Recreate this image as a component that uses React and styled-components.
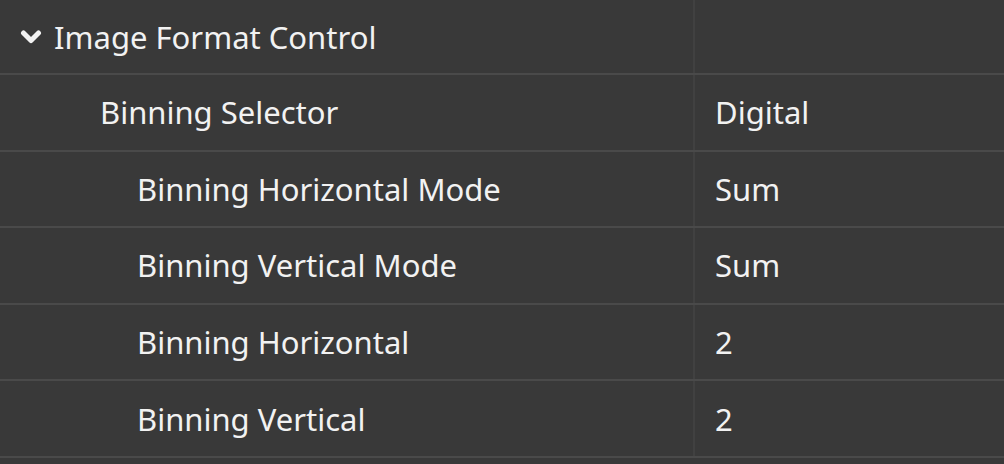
import React from "react"
import styled, { createGlobalStyle } from "styled-components"

const GlobalStyle = createGlobalStyle`
  html, body {
    margin: 0;
    padding: 0;
    background: #393939;
  }
  body {
    font-family: "Noto Sans", "Open Sans", sans-serif;
    color: #f2f2f2;
  }
`

const Table = styled.div`
  width: 1004px;
  height: 464px;
  overflow: hidden;
  background: #393939;
`

const Row = styled.div`
  display: grid;
  grid-template-columns: 695px 1fr;
  height: ${p => p.$height}px;
  border-bottom: 2px solid #4a4a4a;
  box-sizing: border-box;
`

const NameCell = styled.div`
  display: flex;
  align-items: center;
  gap: 12px;
  padding-left: ${p => p.$indent}px;
  border-right: 2px solid #414141;
  font-size: 31px;
  white-space: nowrap;
`

const ValueCell = styled.div`
  display: flex;
  align-items: center;
  padding-left: 20px;
  font-size: 31px;
`

const Chevron = () => (
  <svg width="22" height="18" viewBox="0 0 22 18">
    <path d="M3.5 5 L11 12.5 L18.5 5" fill="none" stroke="#f2f2f2" strokeWidth="5" strokeLinecap="round" strokeLinejoin="round" />
  </svg>
)

const rows = [
  { name: "Binning Selector", value: "Digital", indent: 100 },
  { name: "Binning Horizontal Mode", value: "Sum", indent: 137 },
  { name: "Binning Vertical Mode", value: "Sum", indent: 137 },
  { name: "Binning Horizontal", value: "2", indent: 137 },
  { name: "Binning Vertical", value: "2", indent: 137 },
]

const App = () => {
  return (
    <>
      <GlobalStyle />
      <Table>
        <Row $height={75}>
          <NameCell $indent={20}>
            <Chevron />
            Image Format Control
          </NameCell>
          <ValueCell />
        </Row>
        {rows.map(r => (
          <Row key={r.name} $height={76.6}>
            <NameCell $indent={r.indent}>{r.name}</NameCell>
            <ValueCell>{r.value}</ValueCell>
          </Row>
        ))}
      </Table>
    </>
  )
}

export default App
